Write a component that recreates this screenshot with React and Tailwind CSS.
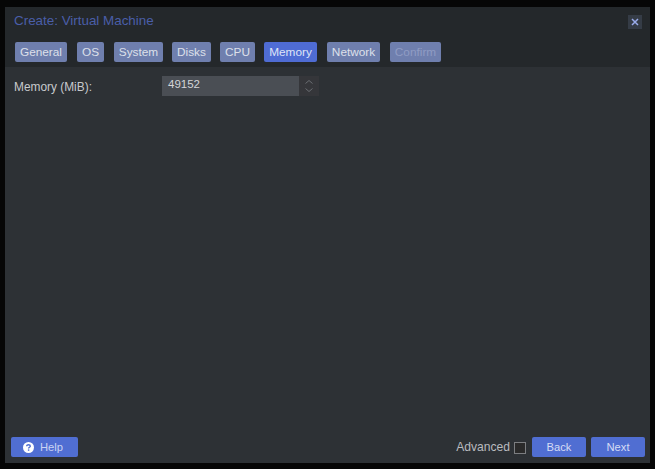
import React from 'react';

const tabs = [
    { label: "General", width: "w-[52px]", margin: "ml-0" },
    { label: "OS", width: "w-[27px]", margin: "ml-[10px]" },
    { label: "System", width: "w-[49px]", margin: "ml-[10px]" },
    { label: "Disks", width: "w-[39px]", margin: "ml-[9px]" },
    { label: "CPU", width: "w-[35px]", margin: "ml-[9px]" },
    { label: "Memory", width: "w-[53px]", margin: "ml-[9px]", active: true },
    { label: "Network", width: "w-[53px]", margin: "ml-[10px]" },
    { label: "Confirm", width: "w-[51px]", margin: "ml-[10px]", disabled: true },
];

const TabButton = ({ tab }) => {
    let color = "bg-[#6f7fae] text-[#dde0ea]";
    if (tab.active) color = "bg-[#4f6cd4] text-[#dfe4f7]";
    if (tab.disabled) color = "bg-[#6f7fae] text-[#8f9cc4]";
    return (
        <div className={`${tab.width} ${tab.margin} ${color} h-5 pt-[1px] rounded-[2px] flex items-center justify-center text-[11.8px]`}>
            {tab.label}
        </div>
    );
};

const App = () => {
    return (
        <div className="w-[655px] h-[469px] bg-[#060606] pt-[7px] pb-[6px] pl-[5px] pr-[5px] overflow-hidden font-['Liberation_Sans',Arial,sans-serif]">
            <div className="w-full h-full flex flex-col bg-[#2d3135]">
                <div className="h-[60px] bg-[#24282b] shrink-0 flex flex-col">
                    <div className="h-[35px] flex items-start justify-between pl-[9px] pr-[8px]">
                        <span className="text-[13.4px] leading-[14px] mt-[7px] text-[#4a5ea8]">Create: Virtual Machine</span>
                        <div className="w-[14px] h-[14px] mt-[8px] bg-[#353c46] flex items-center justify-center">
                            <svg width="8" height="8" viewBox="0 0 8 8" fill="none" stroke="#9aaceb" strokeWidth="1.5">
                                <path d="M1 1L7 7M7 1L1 7" />
                            </svg>
                        </div>
                    </div>
                    <div className="flex pl-[10px]">
                        {tabs.map((tab) => <TabButton key={tab.label} tab={tab} />)}
                    </div>
                </div>

                <div className="flex-1 pt-[9px] pl-[9px]">
                    <div className="flex items-center h-5">
                        <span className="w-[148px] text-[11.9px] text-[#c8cacd] pt-[3px]">Memory (MiB):</span>
                        <div className="w-[137px] h-5 bg-[#4a4e54] text-[11.5px] text-[#d4d5d8] pl-[6px] leading-[16px]">49152</div>
                        <div className="w-5 h-5 bg-[#35363a] flex items-center justify-center">
                            <svg width="10" height="14" viewBox="0 0 10 14" fill="none" stroke="#6a6d72" strokeWidth="1">
                                <path d="M1.5 4.5L5 1.5L8.5 4.5M1.5 9.5L5 12.5L8.5 9.5" />
                            </svg>
                        </div>
                    </div>
                </div>

                <div className="h-[26px] shrink-0 flex items-start justify-between pl-[6px] pr-[5px]">
                    <div className="w-[67px] h-5 rounded-[2px] bg-[#506ed2] flex items-center pl-[12px] gap-[6px] text-[11.2px] text-[#c9d3f3]">
                        <svg width="11" height="11" viewBox="0 0 11 11">
                            <circle cx="5.5" cy="5.5" r="5.5" fill="#ffffff" />
                            <path d="M3.7 4.3C3.7 3.3 4.5 2.7 5.5 2.7C6.5 2.7 7.3 3.3 7.3 4.2C7.3 5.3 5.6 5.3 5.6 6.5" fill="none" stroke="#506ed2" strokeWidth="1.4" />
                            <rect x="4.9" y="7.4" width="1.4" height="1.4" fill="#506ed2" />
                        </svg>
                        <span>Help</span>
                    </div>
                    <div className="flex items-center h-5">
                        <span className="text-[12.1px] text-[#b9bbbf] mr-1 pt-[1px]">Advanced</span>
                        <div className="w-3 h-3 mt-[1px] bg-[#2a2a2a] border border-[#7c7e81] mr-[6px]" />
                        <div className="w-[54px] h-5 rounded-[2px] bg-[#506ed2] flex items-center justify-center text-[11.2px] text-[#d5dcf5] mr-[5px]">Back</div>
                        <div className="w-[54px] h-5 rounded-[2px] bg-[#506ed2] flex items-center justify-center text-[11.2px] text-[#d5dcf5]">Next</div>
                    </div>
                </div>
            </div>
        </div>
    );
};

export default App;
